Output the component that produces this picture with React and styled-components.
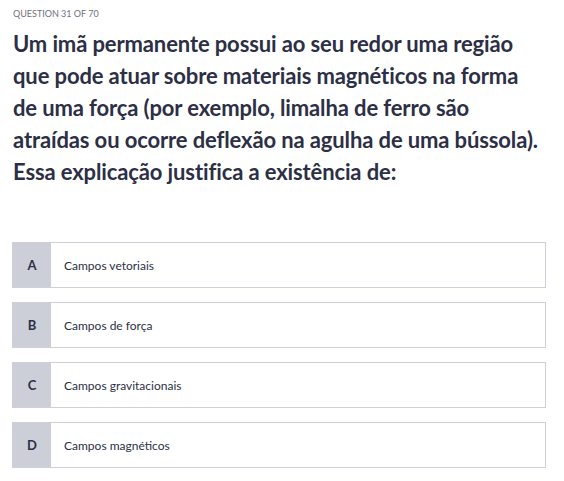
import React from 'react';
import styled, { createGlobalStyle } from 'styled-components';

const GlobalStyle = createGlobalStyle`
  body {
    margin: 0;
    background: #ffffff;
    font-family: Lato, 'Open Sans', sans-serif;
  }
`;

const Page = styled.div`
  width: 534px;
  padding: 8px 18px 0 12px;
`;

const Counter = styled.div`
  font-size: 9px;
  color: #6e7080;
  text-transform: uppercase;
  line-height: 11px;
  padding-left: 1px;
`;

const Question = styled.h1`
  margin: 9px 0 0 1px;
  font-size: 22px;
  line-height: 32px;
  font-weight: 700;
  letter-spacing: -0.12px;
  color: #2c2f45;
`;

const Options = styled.div`
  display: flex;
  flex-direction: column;
  gap: 14px;
  margin-top: 54px;
`;

const Option = styled.div`
  display: flex;
  height: 46px;
  box-sizing: border-box;
  border: 1px solid #cfd0da;
  background: #fff;
`;

const Letter = styled.div`
  width: 38px;
  background: #cdcfd8;
  display: flex;
  align-items: center;
  justify-content: center;
  font-size: 13px;
  font-weight: 700;
  color: #2c2f45;
`;

const Label = styled.div`
  display: flex;
  align-items: center;
  padding-left: 13px;
  font-size: 12px;
  color: #2c2f45;
`;

const options = [
  ['A', 'Campos vetoriais'],
  ['B', 'Campos de força'],
  ['C', 'Campos gravitacionais'],
  ['D', 'Campos magnéticos'],
];

export default function App() {
  return (
    <>
      <GlobalStyle />
      <Page>
        <Counter>Question 31 of 70</Counter>
        <Question>
          Um imã permanente possui ao seu redor uma região que pode atuar sobre materiais magnéticos na forma de uma força (por exemplo, limalha de ferro são atraídas ou ocorre deflexão na agulha de uma bússola). Essa explicação justifica a existência de:
        </Question>
        <Options>
          {options.map(([key, text]) => (
            <Option key={key}>
              <Letter>{key}</Letter>
              <Label>{text}</Label>
            </Option>
          ))}
        </Options>
      </Page>
    </>
  );
}
